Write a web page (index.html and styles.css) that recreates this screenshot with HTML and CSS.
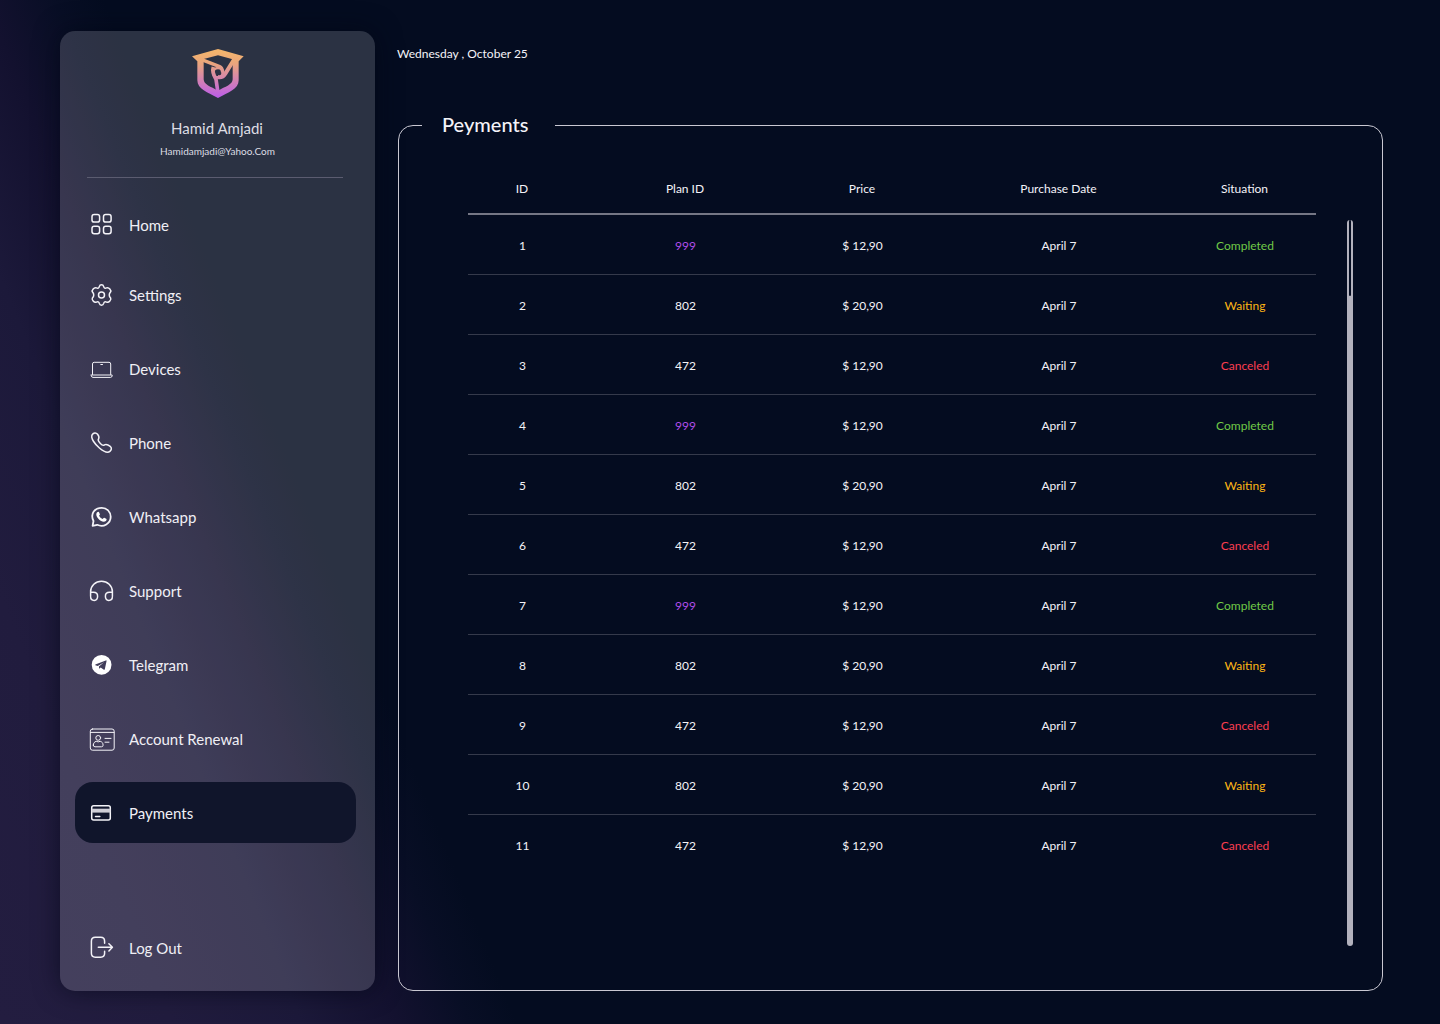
FILE: index.html
```html
<!DOCTYPE html>
<html lang="en">
<head>
<meta charset="utf-8">
<title>Payments</title>
<link rel="stylesheet" href="styles.css">
</head>
<body>
<div class="app">
  <aside class="sidebar">
    <svg class="logo" viewBox="154 54 162 153" fill="none">
      <defs><linearGradient id="brand" gradientUnits="userSpaceOnUse" x1="0" y1="66" x2="0" y2="200"><stop offset="0" stop-color="#f3b46d"/><stop offset=".25" stop-color="#eaa67c"/><stop offset="1" stop-color="#bd5fe6"/></linearGradient></defs>
      <path fill="url(#brand)" fill-rule="evenodd" d="M157 79L235 57L312 79L297 94V151C297 178 266 187 235 204C204 187 173 178 173 151V94ZM192 92V148C192 164 213 170 235 182C257 170 279 164 279 148V88L235 76L192 87Z"/>
      <g stroke="url(#brand)">
        <path d="M186 89L240 110Q248 113 249 127" stroke-width="10"/>
        <path d="M286 84L257 131Q248 145 234 141" stroke-width="12"/>
        <path d="M235 188L229 148Q216 126 221 111" stroke-width="11"/>
        <circle cx="235" cy="128" r="14" stroke-width="8"/>
      </g>
    </svg>
    <div class="name">Hamid Amjadi</div>
    <div class="email">Hamidamjadi@Yahoo.Com</div>
    <nav class="nav">
      <a class="item home"><svg class="icon" viewBox="0 0 25 25"><rect x="3" y="2.5" width="7.6" height="7.6" rx="2.2"/><rect x="14.5" y="2.5" width="7.6" height="7.6" rx="2.2"/><rect x="3" y="14.2" width="7.6" height="7.6" rx="2.2"/><rect x="14.5" y="14.2" width="7.6" height="7.6" rx="2.2"/></svg>Home</a>
      <a class="item"><svg class="icon" viewBox="0 0 25 25"><circle cx="12.5" cy="13" r="3"/><path d="M10.3 4.6Q10.8 2.8 12.5 2.8T14.7 4.6C15.1 6.2 16.2 6.7 17.6 5.9C20 4.9 22.5 8.6 21.6 9.9C19.8 11.6 19.8 14.3 21.6 16C22.5 17.5 20 21 17.6 20.1C16.2 19.3 15.1 19.8 14.7 21.4Q14.2 23.2 12.5 23.2T10.3 21.4C9.9 19.8 8.8 19.3 7.4 20.1C5 21 2.5 17.5 3.4 16C5.2 14.3 5.2 11.6 3.4 9.9C2.5 8.6 5 4.9 7.4 5.9C8.8 6.7 9.9 6.2 10.3 4.6Z"/></svg>Settings</a>
      <a class="item"><svg class="icon thin" viewBox="0 0 25 25"><path d="M3.5 17.5V7Q3.5 5.3 5.2 5.3H20Q21.7 5.3 21.7 7V17.5M2.2 18H23.2V18.7Q23 20.4 21.5 20.4H4Q2.4 20.4 2.2 18.7ZM11.8 7.5H13.5"/></svg>Devices</a>
      <a class="item"><svg class="icon" viewBox="0 0 25 25"><path d="M3.2 4.6C4.5 2.6 7 2.2 8.6 4.2C9.7 5.6 10.7 7 9.5 9C8.5 10.5 9.3 11.3 11.1 13.2C13.2 15.4 14 16 15.4 14.9C17.4 13.9 18.8 14.5 21.2 16.4C23 17.8 22.6 20 20.9 21.4C18.7 23.3 14.6 21.6 10.4 18C6.1 14.3 1.2 8.2 3.2 4.6Z"/></svg>Phone</a>
      <a class="item"><svg class="icon heavy" viewBox="0 0 25 25"><path d="M4.5 17C0.8 9.5 6 3.8 12.7 3.8C18 3.8 21.7 8 21.7 12.8C21.7 19.6 14.5 23.8 8.2 20.8L3.6 21.8Z"/><path class="solid" d="M8.2 8.2Q9.2 7.5 9.9 8L10.9 10.2Q11 10.8 10 11.7Q11.3 14.2 13.8 15Q14.8 13.6 15.3 13.8L17.6 14.9Q17.6 17.6 14.7 17.7C11.4 17.4 7.4 13.5 7.3 10.4Q7.4 8.8 8.2 8.2Z"/></svg>Whatsapp</a>
      <a class="item"><svg class="icon" viewBox="0 0 25 25"><path d="M1.6 18V13.8A10.9 10.6 0 0 1 23.4 13.8V18M1.6 14.3H4.5Q8.6 14.3 8.6 18.2T5.2 22.4Q1.6 22.4 1.6 18.5M23.4 14.3H20.5Q16.4 14.3 16.4 18.2T19.8 22.4Q23.4 22.4 23.4 18.5"/></svg>Support</a>
      <a class="item"><svg class="icon" viewBox="0 0 25 25"><path class="solid" fill-rule="evenodd" d="M2.7 12.8A9.9 9.9 0 1 0 22.5 12.8A9.9 9.9 0 1 0 2.7 12.8ZM6.3 12.4L16.8 8.4Q17.8 8.2 17.5 9.3L15.8 17.3Q15.5 18.2 14.5 17.6L11.7 15.5L10.2 16.8L9.9 14.5L15 10.2L8.8 14L6.3 13.3Z"/></svg>Telegram</a>
      <a class="item"><svg class="icon thin" viewBox="0 0 25 25"><rect x="1.3" y="2" width="23.9" height="21.2" rx="2.2"/><path d="M1.5 5.4H25M16 11.4H22M16 15.2H20"/><circle cx="9.2" cy="10.9" r="2.4"/><path d="M4.3 18.2C4.3 16 5.5 14.8 7.2 14.3Q9.2 15.5 11.2 14.3C13 14.8 14.1 16 14.1 18.2Q14.1 19.8 12.4 19.8H6Q4.3 19.8 4.3 18.2Z"/></svg>Account Renewal</a>
      <a class="item active"><svg class="icon" viewBox="0 0 25 25"><rect x="2.7" y="5.7" width="18.6" height="14.4" rx="2"/><path class="band" d="M2.7 8.7H21.3V12.6H2.7Z"/><path d="M6.5 16.4H10.8"/></svg>Payments</a>
      <a class="item logout"><svg class="icon" viewBox="0 0 25 25"><path d="M15.6 8.2V6.2Q15.6 2.3 11.7 2.3H6.3Q2.4 2.3 2.4 6.2V18.3Q2.4 22.2 6.3 22.2H11.7Q15.6 22.2 15.6 18.3V16.3M9.3 12.3H23M19.9 8.7L23.4 12.3L19.9 15.9"/></svg>Log Out</a>
    </nav>
  </aside>
  <main class="main">
    <div class="date">Wednesday , October 25</div>
    <fieldset class="panel">
      <legend class="title">Peyments</legend>
      <div class="content">
        <div class="table">
          <div class="row head"><span>ID</span><span>Plan ID</span><span>Price</span><span>Purchase Date</span><span>Situation</span></div>
          <div class="row"><span>1</span><span class="plan">999</span><span>$ 12,90</span><span>April 7</span><span class="completed">Completed</span></div>
          <div class="row"><span>2</span><span>802</span><span>$ 20,90</span><span>April 7</span><span class="waiting">Waiting</span></div>
          <div class="row"><span>3</span><span>472</span><span>$ 12,90</span><span>April 7</span><span class="canceled">Canceled</span></div>
          <div class="row"><span>4</span><span class="plan">999</span><span>$ 12,90</span><span>April 7</span><span class="completed">Completed</span></div>
          <div class="row"><span>5</span><span>802</span><span>$ 20,90</span><span>April 7</span><span class="waiting">Waiting</span></div>
          <div class="row"><span>6</span><span>472</span><span>$ 12,90</span><span>April 7</span><span class="canceled">Canceled</span></div>
          <div class="row"><span>7</span><span class="plan">999</span><span>$ 12,90</span><span>April 7</span><span class="completed">Completed</span></div>
          <div class="row"><span>8</span><span>802</span><span>$ 20,90</span><span>April 7</span><span class="waiting">Waiting</span></div>
          <div class="row"><span>9</span><span>472</span><span>$ 12,90</span><span>April 7</span><span class="canceled">Canceled</span></div>
          <div class="row"><span>10</span><span>802</span><span>$ 20,90</span><span>April 7</span><span class="waiting">Waiting</span></div>
          <div class="row"><span>11</span><span>472</span><span>$ 12,90</span><span>April 7</span><span class="canceled">Canceled</span></div>
        </div>
        <div class="scrollbar"><div class="thumb"></div></div>
      </div>
    </fieldset>
  </main>
</div>
</body>
</html>
```
FILE: styles.css
```css
* { box-sizing: border-box; }

body {
  margin: 0;
  font-family: Lato, "Liberation Sans", sans-serif;
  color: #f4f3f8;
}

.app {
  display: flex;
  gap: 23px;
  width: 1440px;
  height: 1024px;
  padding: 31px 57px 33px 60px;
  overflow: hidden;
  background: linear-gradient(68deg, #231d40 0, #211c3e 160px, #1c193a 280px, #13112f 370px, #080e25 435px, #040c20 480px);
}

.sidebar {
  display: flex;
  flex-direction: column;
  align-items: center;
  width: 315px;
  height: 960px;
  padding: 17px 19px 0 15px;
  border-radius: 15px;
  background: rgba(255, 255, 255, .155);
  box-shadow: 0 0 26px rgba(2, 6, 20, .6);
}

.logo { width: 54px; height: 51px; margin-left: 5px; }

.name {
  margin: 19px 0 0 3px;
  font-size: 15px;
  line-height: 20px;
  color: #dddde4;
}

.email {
  margin: 6px 0 0 4px;
  font-size: 10px;
  line-height: 15px;
  color: #dddde4;
}

.nav {
  display: flex;
  flex-direction: column;
  gap: 13px;
  width: 100%;
  padding-top: 17px;
  margin-top: 18px;
  background: linear-gradient(#5b5c70, #5b5c70) 12px 0 / 256px 1px no-repeat;
}

.item {
  display: flex;
  align-items: center;
  gap: 15px;
  height: 61px;
  padding-left: 14px;
  border-radius: 18px;
  font-size: 15px;
  color: #f0eff5;
}

.home { margin-bottom: -4px; }
.active { background: #10152b; }
.logout { margin-top: 61px; }

.icon {
  flex: none;
  width: 25px;
  height: 25px;
  overflow: visible;
  fill: none;
  stroke: #f4f3f8;
  stroke-width: 1.5;
  stroke-linecap: round;
  stroke-linejoin: round;
}

.thin { margin-top: 1px; stroke-width: 1; }
.heavy { stroke-width: 1.8; }
.icon .solid { fill: #fff; stroke: none; }
.icon .band { fill: #cfced6; stroke: none; }

.main { flex: 1; }

.date {
  height: 20px;
  margin: 13px 0 0 -1px;
  font-size: 12px;
  line-height: 20px;
}

.panel {
  height: 879px;
  min-width: 0;
  margin: 48px 0 0;
  padding: 0;
  border: 1px solid #c9c8d2;
  border-radius: 15px;
}

.title {
  height: 27px;
  margin-left: 23px;
  padding: 0 27px 0 20px;
  font-size: 20px;
  font-weight: 500;
  line-height: 24px;
}

.content {
  display: flex;
  gap: 31px;
  padding: 24px 0 0 69px;
}

.table { width: 848px; }

.row {
  display: grid;
  grid-template-columns: 108px 218px 136px 257px 115px;
  align-items: center;
  height: 60px;
  padding: 1px 0 0 .5px;
  border-bottom: 1px solid #353a4b;
  font-size: 12px;
  text-align: center;
}

.head {
  height: 52px;
  padding-left: 0;
  border-bottom: 2px solid #757785;
}

.row:last-child { border-bottom-color: transparent; }

.plan { color: #b04ce8; }
.completed { color: #70ca47; }
.waiting { color: #fdb515; }
.canceled { color: #fc3e50; }

.scrollbar {
  width: 6px;
  height: 726px;
  margin-top: 57px;
  padding: 0 2px;
  border-radius: 3px;
  background: #b3b2bd;
}

.thumb { height: 76px; border-radius: 1px; background: #040c20; }
```
